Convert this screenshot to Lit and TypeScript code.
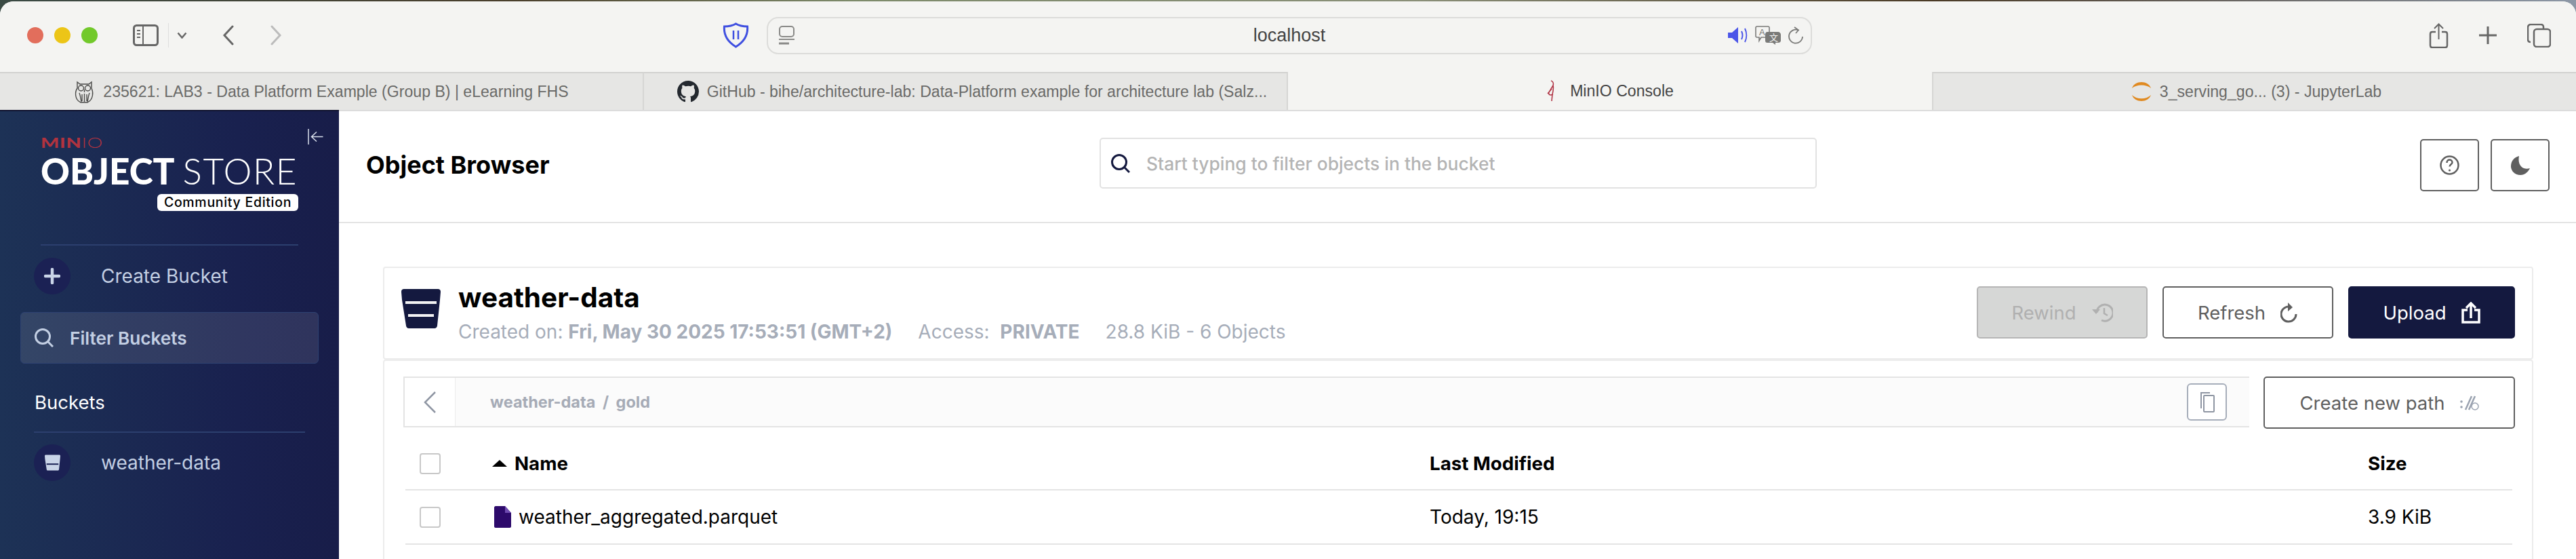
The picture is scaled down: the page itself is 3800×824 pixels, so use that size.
import { LitElement, html, css, svg } from 'lit';
import { customElement } from 'lit/decorators.js';

const ico = (w: number, h: number, vb: string, body: unknown, cls = '') =>
  html`<svg class=${cls} width=${w} height=${h} viewBox=${vb} fill="none">${body}</svg>`;

const owl = ico(31, 33, '0 0 31 33', svg`
  <g stroke="#4a4a48" stroke-width="1.4">
    <path d="M5 2l4 3h13l4-3v9c3 6 2 15-3 19l-3 2h-10l-3-2C2 26 1 17 5 11z"/>
    <circle cx="10.5" cy="11" r="4"/><circle cx="20.5" cy="11" r="4"/>
    <path d="M15.5 13v4M8 18c2 5 2 9 3 13M23 18c-2 5-2 9-3 13M15.5 19v12M12 20v10M19 20v10"/>
  </g>`);

const github = ico(32, 32, '0 0 16 16', svg`
  <path fill="#24292f" d="M8 0C3.58 0 0 3.58 0 8c0 3.54 2.29 6.53 5.47 7.59.4.07.55-.17.55-.38 0-.19-.01-.82-.01-1.49-2.01.37-2.53-.49-2.69-.94-.09-.23-.48-.94-.82-1.13-.28-.15-.68-.52-.01-.53.63-.01 1.08.58 1.23.82.72 1.21 1.87.87 2.33.66.07-.52.28-.87.51-1.07-1.78-.2-3.64-.89-3.64-3.95 0-.87.31-1.59.82-2.15-.08-.2-.36-1.02.08-2.12 0 0 .67-.21 2.2.82.64-.18 1.32-.27 2-.27s1.36.09 2 .27c1.53-1.04 2.2-.82 2.2-.82.44 1.1.16 1.92.08 2.12.51.56.82 1.27.82 2.15 0 3.07-1.87 3.75-3.65 3.95.29.25.54.73.54 1.48 0 1.07-.01 1.93-.01 2.2 0 .21.15.46.55.38A8.01 8.01 0 0 0 16 8c0-4.42-3.58-8-8-8z"/>`);

const flamingo = ico(16, 32, '0 0 16 32', svg`
  <path stroke="#b03445" stroke-width="1.6" d="M7 1c3 1 4 4 3 7L4 18c-1 2 0 4 3 4l3-1M10 8c1 4 0 9-1 13l-1 10M8 13L2 20"/>`);

const jupyter = ico(30, 30, '0 0 30 30', svg`
  <path fill="#e08a21" d="M1 10C5 -2 25 -2 29 10C22 4 8 4 1 10zM1 20C8 27 22 27 29 20C25 32 5 32 1 20z"/>`);

const bucket = (fill: string, line: string) => ico(58, 58, '0 0 58 58', svg`
  <path fill=${fill} d="M4 0h50c2.5 0 4 1.5 4 4l-1 12-4 38c0 2-2 4-4 4H11c-2 0-4-2-4-4L1 16 0 4c0-2.500 1.500-4 4-4z"/>
  <rect fill=${line} x="6" y="18" width="46" height="4"/>
  <rect fill=${line} x="10" y="37" width="38" height="4"/>`, 'bucket-ico');

const searchIcon = (w: number, c: string, sw: number) => ico(w, w, '0 0 28 28', svg`
  <circle cx="12" cy="12" r="10.500" stroke=${c} stroke-width=${sw}/>
  <path d="M19.500 19.500L27 27" stroke=${c} stroke-width=${sw}/>`);

@customElement('app-root')
export class AppRoot extends LitElement {
  static override styles = css`
    :host {
      display: block;
      width: 3800px;
      height: 824px;
      overflow: hidden;
      background: linear-gradient(90deg, #3a4a44, #4a3f2c 20%, #7d8a6a 33%, #8a8f78 55%, #4a3a26 75%, #8c97a6);
      font-family: Inter, sans-serif;
    }
    .window {
      margin-top: 2px;
      height: 822px;
      border-radius: 20px 20px 0 0;
      overflow: hidden;
      display: flex;
      flex-direction: column;
      background: #fff;
    }

    /* safari chrome */
    .toolbar {
      height: 104px;
      flex: none;
      background: #f4f4f2;
      display: flex;
      align-items: center;
      padding-bottom: 4px;
      box-sizing: border-box;
    }
    .lights { display: flex; gap: 16px; margin-left: 40px; }
    .light { width: 24px; height: 24px; border-radius: 50%; }
    .toggle { margin-left: 52px; }
    .sep { width: 1px; height: 36px; background: #dedede; margin-left: 14px; }
    .chev { margin-left: 12px; }
    .back { margin-left: 52px; }
    .fwd { margin-left: 54px; }
    .shield { margin-left: 650px; }
    .address {
      margin-left: 26px;
      width: 1542px;
      height: 55px;
      box-sizing: border-box;
      border: 2px solid #dcdcda;
      border-radius: 17px;
      display: flex;
      align-items: center;
      padding: 0 10px 0 15px;
      font: 27px 'Liberation Sans', sans-serif;
      color: #444;
    }
    .host-name { flex: 1; text-align: center; padding-left: 82px; }
    .addr-icons { display: flex; align-items: center; gap: 11px; }
    .tools { margin-left: auto; display: flex; align-items: center; gap: 44px; padding-right: 37px; }

    .tabs {
      height: 56px;
      flex: none;
      display: flex;
      font: 23.100px 'Liberation Sans', sans-serif;
      color: #6a6a68;
    }
    .tab {
      width: 950px;
      box-sizing: border-box;
      background: #e6e6e4;
      border-top: 2px solid #d2d2d0;
      border-right: 2px solid #d6d6d4;
      display: flex;
      align-items: center;
      justify-content: center;
      gap: 12px;
    }
    .tab.gh { padding-left: 20px; }
    .tab.active { background: #f4f4f2; border-top: none; color: #444; border-right: none; gap: 19px; }
    .tab:last-child { border-right: none; border-left: 2px solid #d6d6d4; padding-left: 5px; }

    .body { flex: 1; display: flex; min-height: 0; }

    /* minio sidebar */
    .side {
      width: 500px;
      flex: none;
      position: relative;
      background: linear-gradient(90deg, #1d3256, #19214f 70%, #181d49);
      border-top: 2px solid #10132f;
      box-sizing: border-box;
      color: #c3cfe3;
    }
    .collapse { position: absolute; left: 454px; top: 26px; }
    .logo-wrap { padding: 36px 60px 0; height: 196px; box-sizing: border-box; }
    .minio { font: 900 21.500px/20px Lato, sans-serif; color: #b0333f; letter-spacing: 0.5px; height: 20px; transform: scaleX(1.34); transform-origin: left; }
    .minio span { font-weight: 300; }
    .store { font: 900 52.500px/46px Lato, sans-serif; color: #fff; margin-top: 9px; white-space: nowrap; transform: scaleX(1.01); transform-origin: left; }
    .store span { font-weight: 300; margin-left: 1px; letter-spacing: 1.500px; }
    .edition {
      width: 208px;
      height: 25px;
      margin: 11px 0 0 172px;
      box-sizing: border-box;
      background: #fff;
      border-radius: 6px;
      color: #000;
      font: 500 19.500px/25px Inter, sans-serif;
      letter-spacing: 0.7px;
      text-align: center;
      white-space: nowrap;
    }
    .rule { height: 2px; background: #2c3f6e; }
    .rule.top { margin: 0 60px; }
    .rule.buckets { margin: 0 50px; }
    .item {
      display: flex;
      align-items: center;
      padding-left: 50px;
      font-size: 28px;
    }
    .item.create { height: 90px; margin-bottom: 8px; }
    .item.entry { height: 86px; margin-top: 1px; }
    .item .dot {
      width: 54px;
      height: 54px;
      border-radius: 50%;
      background: #1b2154;
      display: flex;
      align-items: center;
      justify-content: center;
      margin-right: 45px;
    }
    .filter {
      margin: 0 30px;
      height: 76px;
      box-sizing: border-box;
      padding-left: 20px;
      display: flex;
      align-items: center;
      gap: 24px;
      border-radius: 6px;
      border: 1px solid #2e4272;
      background: rgba(255, 255, 255, 0.1);
      font-size: 26.200px;
      font-weight: 600;
    }
    .side-head { color: #fff; font-size: 27.500px; padding-left: 51px; line-height: 32px; margin-top: 41px; margin-bottom: 27px; }

    /* object browser */
    .main { flex: 1; min-width: 0; border-top: 2px solid #dcdcdc; box-sizing: border-box; }
    .page-head {
      height: 165px;
      box-sizing: border-box;
      border-bottom: 2px solid #e4e4e4;
      display: flex;
      align-items: flex-start;
      padding-right: 39px;
    }
    .page-title { font-size: 36px; font-weight: 700; color: #000; width: 1122px; padding: 59px 0 0 40px; box-sizing: border-box; line-height: 40px; }
    .obj-search {
      width: 1058px;
      height: 75px;
      margin-top: 39px;
      box-sizing: border-box;
      border: 2px solid #e2e2e2;
      border-radius: 5px;
      display: flex;
      align-items: center;
      padding-left: 15px;
      gap: 24px;
      font-size: 26.400px;
      font-weight: 500;
      color: #b4b4b4;
    }
    .head-btns { margin-left: auto; margin-top: 41px; display: flex; gap: 17px; }
    .square {
      width: 87px;
      height: 77px;
      box-sizing: border-box;
      border: 2px solid #5f5f5f;
      border-radius: 5px;
      display: flex;
      align-items: center;
      justify-content: center;
    }
    .content { padding: 64px 63px 0 65px; }
    .card { border: 2px solid #ececec; box-sizing: border-box; border-radius: 4px; }
    .info { height: 137px; display: flex; align-items: center; padding: 0 25px; }
    .bucket-ico { align-self: flex-start; margin-top: 31px; }
    .info-text { margin-left: 26px; margin-top: -2px; }
    .bucket-name { font-size: 40.500px; font-weight: 700; color: #000; line-height: 46px; }
    .meta { font-size: 28px; color: #a6adb9; line-height: 34px; margin-top: 10px; white-space: nowrap; display: flex; gap: 38px; }
    .meta b { font-weight: 700; }
    .actions { margin-left: auto; display: flex; gap: 22px; margin-top: -2px; }
    .btn {
      height: 77px;
      width: 252px;
      box-sizing: border-box;
      border: 2px solid #5f5f5f;
      border-radius: 5px;
      display: flex;
      align-items: center;
      justify-content: center;
      gap: 22px;
      font-size: 27.500px;
      font-weight: 400;
      color: #5f5f5f;
      background: #fff;
    }
    .btn.off { background: #d6d7d6; border-color: #b5b5b5; color: #b0b0b0; }
    .btn.primary { background: #14193f; border-color: #14193f; color: #fff; width: 246px; }
    .btn.path { width: 371px; }
    .list { padding: 23px 25px 0 28px; height: 300px; }
    .bar-row { display: flex; gap: 21px; }
    .crumbs {
      flex: 1;
      height: 75px;
      box-sizing: border-box;
      border-top: 2px solid #e4e4e4;
      border-bottom: 2px solid #e4e4e4;
      border-left: 2px solid #e4e4e4;
      background: #fbfbfb;
      display: flex;
      align-items: center;
      padding-right: 33px;
    }
    .crumb-back {
      width: 75px;
      height: 100%;
      flex: none;
      background: #fff;
      border-right: 1px solid #ececec;
      box-sizing: border-box;
      display: flex;
      align-items: center;
      justify-content: center;
    }
    .crumb-text { margin-left: 51px; font-size: 23.500px; font-weight: 700; color: #a6abb6; word-spacing: 5px; }
    .copy {
      margin-left: auto;
      width: 59px;
      height: 55px;
      box-sizing: border-box;
      border: 2px solid #a6adba;
      border-radius: 6px;
      background: #fff;
      display: flex;
      align-items: center;
      justify-content: center;
    }
    .table { margin: 13px 0 0 3px; width: 3108px; font-size: 28px; color: #000; }
    .row {
      display: grid;
      grid-template-columns: 128px 1383px 1384px 1fr;
      align-items: center;
      border-bottom: 2px solid #e4e4e4;
      height: 80px;
      box-sizing: border-box;
    }
    .row.head { font-weight: 700; height: 78px; font-size: 27.700px; }
    .check { width: 31px; height: 31px; margin-left: 21px; box-sizing: border-box; border: 2px solid #c8c8c8; border-radius: 4px; background: #fff; }
    .name { display: flex; align-items: center; }
    .tri { width: 0; height: 0; border: 11px solid transparent; border-top: 0; border-bottom: 10px solid #000; margin-right: 11px; }
    .file { margin: 0 11px 0 3px; }
  `;

  override render() {
    return html`
      <div class="window">
        <div class="toolbar">
          <div class="lights">
            <div class="light" style="background:#e26e5c"></div>
            <div class="light" style="background:#ecc517"></div>
            <div class="light" style="background:#72c92b"></div>
          </div>
          ${ico(38, 32, '0 0 38 32', svg`
            <rect x="1.500" y="1.500" width="35" height="29" rx="4" stroke="#666" stroke-width="3"/>
            <path d="M15 2v28" stroke="#666" stroke-width="2"/>
            <path d="M6 9h5M6 14h5M6 19h5" stroke="#666" stroke-width="2"/>`, 'toggle')}
          <div class="sep"></div>
          ${ico(15, 10, '0 0 15 10', svg`<path d="M1.500 1.500L7.500 8.500L13.500 1.500" stroke="#666" stroke-width="2.500"/>`, 'chev')}
          ${ico(17, 30, '0 0 17 30', svg`<path d="M15 2L3 15L15 28" stroke="#666" stroke-width="3" stroke-linecap="round"/>`, 'back')}
          ${ico(17, 30, '0 0 17 30', svg`<path d="M2 2L14 15L2 28" stroke="#bcbcbc" stroke-width="3" stroke-linecap="round"/>`, 'fwd')}
          ${ico(39, 38, '0 0 39 38', svg`
            <path d="M19.500 2c5 3 11 4 17 4 1 11-4 22-17 30C6.500 28 1.500 17 2.500 6c6 0 12-1 17-4z" stroke="#3f4fe0" stroke-width="3"/>
            <path d="M16 12v13M23 12v13" stroke="#3f4fe0" stroke-width="2.500"/>`, 'shield')}
          <div class="address">
            ${ico(25, 28, '0 0 25 28', svg`
              <rect x="2" y="1" width="21" height="15" rx="4" stroke="#8a8a88" stroke-width="2"/>
              <path d="M1 20h23" stroke="#8a8a88" stroke-width="2"/>
              <path d="M1 26h15" stroke="#8a8a88" stroke-width="3"/>`)}
            <div class="host-name">localhost</div>
            <div class="addr-icons">
              ${ico(29, 24, '0 0 29 24', svg`
                <path fill="#4b55e8" d="M0 8h6l9-8v24l-9-8H0z"/>
                <path d="M20 6c2 4 2 8 0 12M25 2c3 6 3 14 0 20" stroke="#4b55e8" stroke-width="2"/>`)}
              ${ico(38, 28, '0 0 38 28', svg`
                <path d="M3 1h16c1 0 2 1 2 2v12c0 1-1 2-2 2H9l-3 5v-5H3c-1 0-2-1-2-2V3c0-1 1-2 2-2z" stroke="#7a7a78" stroke-width="1.600"/>
                <text x="6" y="14" font-family="Liberation Sans" font-size="13" fill="#7a7a78">A</text>
                <path fill="#7a7a78" d="M18 9h16c2 0 4 2 4 4v9c0 2-2 3-4 3h-4v3l-4-3h-8c-2 0-3-1-3-3v-9c0-2 1-4 3-4z"/>
                <text x="21" y="22" font-family="Noto Sans CJK SC" font-size="13" fill="#f4f4f2">文</text>`)}
              ${ico(23, 27, '0 0 23 27', svg`
                <path d="M15 5.500A10 10 0 1 0 21 15" stroke="#7a7a78" stroke-width="1.800"/>
                <path d="M9 1l6 4.500L11 10" stroke="#7a7a78" stroke-width="1.800"/>`)}
            </div>
          </div>
          <div class="tools">
            ${ico(29, 37, '0 0 29 37', svg`
              <path d="M10 13H5c-2 0-3 1-3 3v17c0 2 1 3 3 3h19c2 0 3-1 3-3V16c0-2-1-3-3-3h-5" stroke="#666" stroke-width="2.500"/>
              <path d="M14.500 24V2M8 8l6.500-6.500L21 8" stroke="#666" stroke-width="2"/>`)}
            ${ico(28, 28, '0 0 28 28', svg`<path d="M14 1v26M1 14h26" stroke="#666" stroke-width="3"/>`)}
            ${ico(35, 35, '0 0 35 35', svg`
              <path d="M5 27c-2 0-4-1-4-4V5c0-2 2-4 4-4h15c2 0 4 1 4 4v2" stroke="#666" stroke-width="2.500"/>
              <rect x="10" y="8" width="24" height="26" rx="4" stroke="#666" stroke-width="2.500"/>`)}
          </div>
        </div>

        <div class="tabs">
          <div class="tab">${owl}<span>235621: LAB3 - Data Platform Example (Group B) | eLearning FHS</span></div>
          <div class="tab gh">${github}<span>GitHub - bihe/architecture-lab: Data-Platform example for architecture lab (Salz...</span></div>
          <div class="tab active">${flamingo}<span>MinIO Console</span></div>
          <div class="tab">${jupyter}<span>3_serving_go... (3) - JupyterLab</span></div>
        </div>

        <div class="body">
          <div class="side">
            ${ico(23, 23, '0 0 23 23', svg`<path d="M1 0v23M22.500 11.500H6M13 4.500L5.500 11.500L13 18.500" stroke="#d8dfec" stroke-width="1.500"/>`, 'collapse')}
            <div class="logo-wrap">
              <div class="minio">MIN<span>IO</span></div>
              <div class="store">OBJECT <span>STORE</span></div>
              <div class="edition">Community Edition</div>
            </div>
            <div class="rule top"></div>
            <div class="item create">
              <div class="dot">${ico(24, 24, '0 0 24 24', svg`<path d="M12 2v20M2 12h20" stroke="#c9d4e8" stroke-width="4.500" stroke-linecap="round"/>`)}</div>
              Create Bucket
            </div>
            <div class="filter">
              ${searchIcon(28, '#c3cfe3', 3)}
              <span>Filter Buckets</span>
            </div>
            <div class="side-head">Buckets</div>
            <div class="rule buckets"></div>
            <div class="item entry">
              <div class="dot">${ico(23, 24, '0 0 58 58', svg`
                <path fill="#c9d4e8" d="M4 0h50c2.500 0 4 1.500 4 4l-1 12-4 38c0 2-2 4-4 4H11c-2 0-4-2-4-4L1 16 0 4c0-2.500 1.500-4 4-4z"/>
                <rect fill="#1b2154" x="7" y="32" width="44" height="5"/>`)}</div>
              weather-data
            </div>
          </div>

          <div class="main">
            <div class="page-head">
              <div class="page-title">Object Browser</div>
              <div class="obj-search">
                ${searchIcon(28, '#14193f', 3)}
                <span>Start typing to filter objects in the bucket</span>
              </div>
              <div class="head-btns">
                <div class="square">${ico(29, 29, '0 0 29 29', svg`
                  <circle cx="14.500" cy="14.500" r="13" stroke="#5f5f5f" stroke-width="2.500"/>
                  <path d="M10.500 11c0-3 2-4.500 4-4.500s4 1.500 4 4-4 3-4 6" stroke="#5f5f5f" stroke-width="2.500"/>
                  <circle cx="14.500" cy="22" r="1.600" fill="#5f5f5f"/>`)}</div>
                <div class="square">${ico(28, 28, '0 0 28 28', svg`
                  <path fill="#5f5f5f" d="M12 0C4 2 0 8 0 15c0 7 6 13 14 13 6 0 11-4 14-10-8 3-19-2-16-18z"/>`)}</div>
              </div>
            </div>
            <div class="content">
              <div class="card info">
                ${bucket('#14193f', '#f2f2f2')}
                <div class="info-text">
                  <div class="bucket-name">weather-data</div>
                  <div class="meta">
                    <span>Created on: <b>Fri, May 30 2025 17:53:51 (GMT+2)</b></span>
                    <span>Access:&nbsp; <b>PRIVATE</b></span>
                    <span>28.8 KiB - 6 Objects</span>
                  </div>
                </div>
                <div class="actions">
                  <div class="btn off">Rewind ${ico(32, 28, '0 0 32 28', svg`
                    <path d="M8 14A12 12 0 1 1 15 25" stroke="#b0b0b0" stroke-width="3"/>
                    <path fill="#b0b0b0" d="M1 9l6 7 6-7z"/>
                    <path d="M19 7v8l5 3" stroke="#b0b0b0" stroke-width="2.500"/>`)}</div>
                  <div class="btn">Refresh ${ico(26, 30, '0 0 26 30', svg`
                    <path d="M15 6.500A11 11 0 1 0 23 17" stroke="#5f5f5f" stroke-width="3"/>
                    <path fill="#5f5f5f" d="M11 0l7 7-7 6z"/>`)}</div>
                  <div class="btn primary">Upload ${ico(28, 32, '0 0 28 32', svg`
                    <path d="M9 12H2v18h24V12h-7" stroke="#fff" stroke-width="3.500"/>
                    <path d="M14 24V3M7 9l7-7 7 7" stroke="#fff" stroke-width="3.500"/>`)}</div>
                </div>
              </div>
              <div class="card list">
                <div class="bar-row">
                  <div class="crumbs">
                    <div class="crumb-back">${ico(19, 32, '0 0 19 32', svg`<path d="M17 1L2 16L17 31" stroke="#8f96a3" stroke-width="2.500"/>`)}</div>
                    <div class="crumb-text">weather-data / gold</div>
                    <div class="copy">${ico(22, 30, '0 0 22 30', svg`
                      <path d="M2 24V1h13" stroke="#8f96a3" stroke-width="2"/>
                      <rect x="6" y="5" width="15" height="24" rx="1" stroke="#8f96a3" stroke-width="2"/>`)}</div>
                  </div>
                  <div class="btn path">Create new path ${ico(28, 24, '0 0 28 24', svg`
                    <path d="M8 22L17 2M13 22L22 2" stroke="#9aa2b0" stroke-width="2.500"/>
                    <circle cx="2" cy="10" r="1.800" fill="#9aa2b0"/><circle cx="2" cy="18" r="1.800" fill="#9aa2b0"/>
                    <circle cx="22" cy="17" r="5" stroke="#9aa2b0" stroke-width="1.500"/>`)}</div>
                </div>
                <div class="table">
                  <div class="row head">
                    <div class="check"></div>
                    <div class="name"><div class="tri"></div>Name</div>
                    <div>Last Modified</div>
                    <div>Size</div>
                  </div>
                  <div class="row">
                    <div class="check"></div>
                    <div class="name">
                      ${ico(25, 32, '0 0 25 32', svg`
                        <path fill="#2d0a6b" d="M2 0h14l9 10v20c0 1-1 2-2 2H2c-1 0-2-1-2-2V2C0 1 1 0 2 0z"/>
                        <path fill="#6f4bb0" d="M16 0l9 10h-9z"/>`, 'file')}
                      weather_aggregated.parquet
                    </div>
                    <div>Today, 19:15</div>
                    <div>3.9 KiB</div>
                  </div>
                </div>
              </div>
            </div>
          </div>
        </div>
      </div>
    `;
  }
}
